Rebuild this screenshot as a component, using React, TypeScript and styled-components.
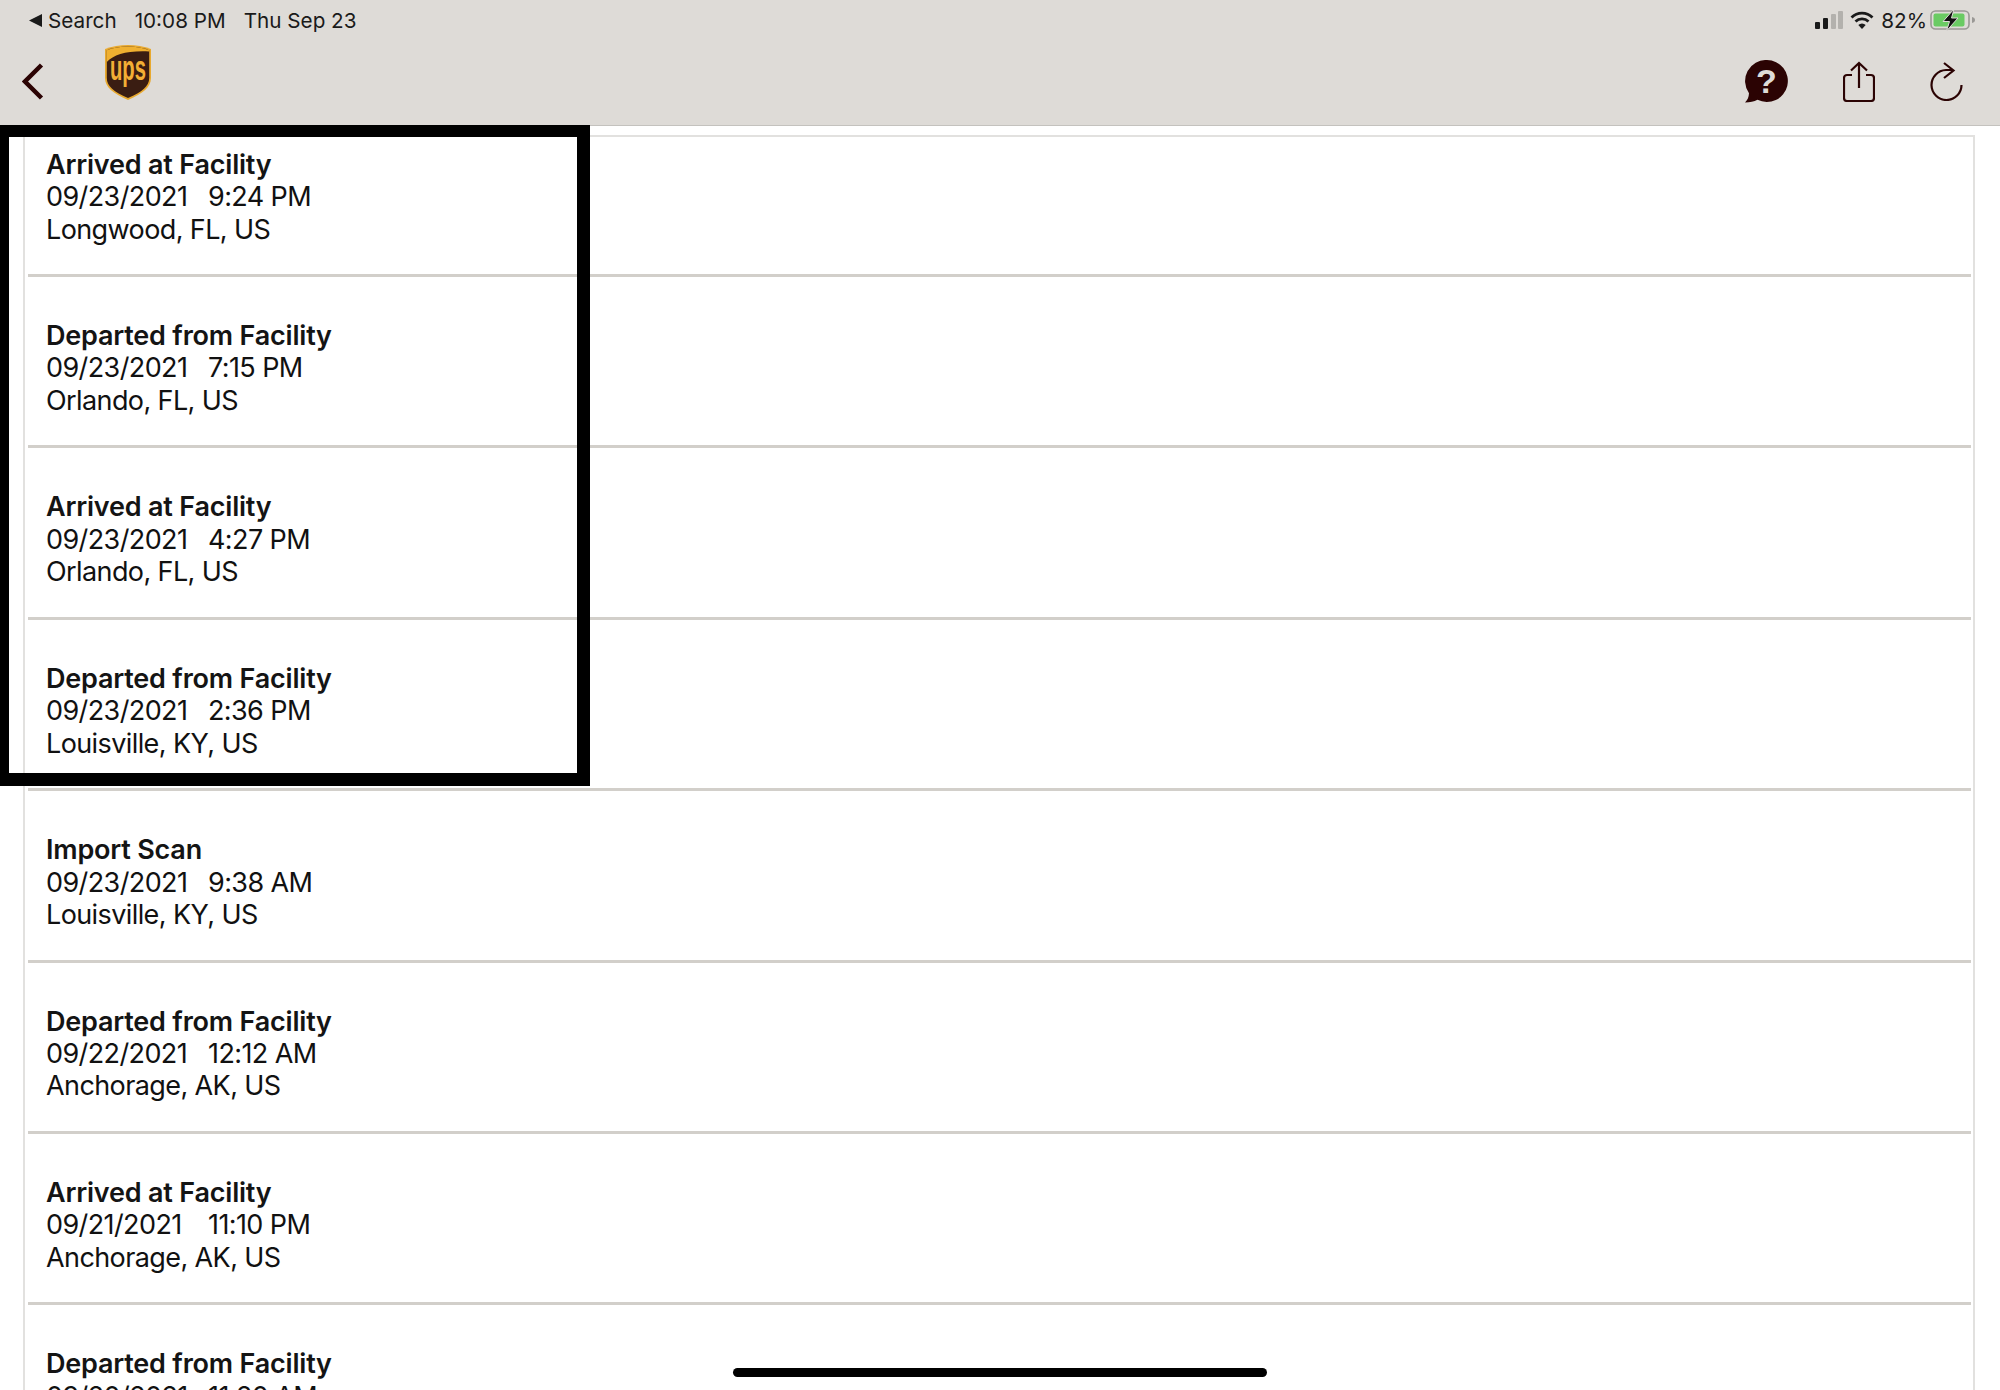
import React, { FC } from "react";
import styled, { createGlobalStyle } from "styled-components";

type ScanEvent = {
  title: string
  date: string
  time: string
  place: string
}

const events: Array<ScanEvent> = [
  { title: "Arrived at Facility", date: "09/23/2021", time: "9:24 PM", place: "Longwood, FL, US" },
  { title: "Departed from Facility", date: "09/23/2021", time: "7:15 PM", place: "Orlando, FL, US" },
  { title: "Arrived at Facility", date: "09/23/2021", time: "4:27 PM", place: "Orlando, FL, US" },
  { title: "Departed from Facility", date: "09/23/2021", time: "2:36 PM", place: "Louisville, KY, US" },
  { title: "Import Scan", date: "09/23/2021", time: "9:38 AM", place: "Louisville, KY, US" },
  { title: "Departed from Facility", date: "09/22/2021", time: "12:12 AM", place: "Anchorage, AK, US" },
  { title: "Arrived at Facility", date: "09/21/2021", time: "11:10 PM", place: "Anchorage, AK, US" },
  { title: "Departed from Facility", date: "09/20/2021", time: "11:20 AM", place: "Anchorage, AK, US" },
];

const GlobalStyle = createGlobalStyle`
  html, body {
    margin: 0;
    padding: 0;
    background: #fff;
  }
  * {
    box-sizing: border-box;
  }
`;

const Screen = styled.div`
  position: relative;
  width: 2000px;
  height: 1390px;
  overflow: hidden;
  background: #fff;
  font-family: Inter, "Liberation Sans", sans-serif;
  color: #111;
`;

const Header = styled.header`
  height: 126px;
  background: #dedbd7;
  border-bottom: 1px solid #c4c2be;
`;

const StatusBar = styled.div`
  height: 40px;
  display: flex;
  align-items: center;
  justify-content: space-between;
  padding: 0 24px 0 29px;
  font-size: 20.7px;
  color: #1a1a1a;
`;

const StatusGroup = styled.div<{ $gap: number }>`
  display: flex;
  align-items: center;
  gap: ${(p) => p.$gap}px;
`;

const BackToApp = styled.span`
  display: flex;
  align-items: center;
  gap: 6px;
`;

const Percent = styled.span`
  margin-right: -4px;
`;

const NavBar = styled.nav`
  height: 83px;
  display: flex;
  align-items: center;
  justify-content: space-between;
  padding: 0 37px 0 22px;
`;

const NavGroup = styled.div<{ $gap: number }>`
  display: flex;
  align-items: center;
  gap: ${(p) => p.$gap}px;
`;

const LogoSlot = styled.div`
  display: flex;
  margin-bottom: 18px;
`;

const Panel = styled.main`
  margin: 9px 25px 0 23px;
  height: 1300px;
  border: 2px solid #e2e1df;
  border-bottom: none;
`;

const Row = styled.section`
  height: 171.4px;
  padding: 43px 0 0 18px;
  margin-left: 3px;
  margin-right: 2px;
  border-bottom: 3px solid #d2cfca;
  font-size: 27px;
  line-height: 32.4px;
  letter-spacing: -0.6px;

  &:first-child {
    height: 140px;
    padding-top: 12px;
  }
`;

const Title = styled.div`
  font-weight: 600;
  color: #141414;
  letter-spacing: -0.2px;
`;

const Stamp = styled.div`
  display: grid;
  grid-template-columns: 162px auto;
`;

const Highlight = styled.div`
  position: absolute;
  left: -5px;
  top: 125px;
  width: 595px;
  height: 661px;
  border: solid #000;
  border-width: 12px 13px 13px 14px;
`;

const HomeBar = styled.div`
  position: absolute;
  left: 733px;
  top: 1368px;
  width: 534px;
  height: 9px;
  border-radius: 5px;
  background: #000;
`;

const Icon = styled.svg`
  display: block;
  flex: none;
`;

const ink = "#2b0303";

const Triangle: FC = () => (
  <Icon width="13" height="13" viewBox="0 0 13 13">
    <path d="M0 6.5 13 0v13z" fill="#1a1a1a" />
  </Icon>
);

const SignalBars: FC = () => (
  <Icon width="28" height="18" viewBox="0 0 28 18">
    <rect x="0" y="11" width="5" height="7" rx="1" fill="#1a1a1a" />
    <rect x="8" y="7" width="5" height="11" rx="1" fill="#1a1a1a" />
    <rect x="16" y="3" width="5" height="15" rx="1" fill="#b3b1ad" />
    <rect x="23" y="0" width="5" height="18" rx="1" fill="#b3b1ad" />
  </Icon>
);

const Wifi: FC = () => (
  <Icon width="24" height="18" viewBox="0 0 24 18">
    <path d="M1.5 6.5a15 15 0 0 1 21 0" fill="none" stroke="#1a1a1a" strokeWidth="2.8" />
    <path d="M5.5 10.5a9.5 9.5 0 0 1 13 0" fill="none" stroke="#1a1a1a" strokeWidth="2.8" />
    <path d="M12 18 8.3 14a5.3 5.3 0 0 1 7.4 0z" fill="#1a1a1a" />
  </Icon>
);

const Battery: FC = () => (
  <Icon width="46" height="22" viewBox="0 0 46 22">
    <rect x="1" y="2" width="38" height="18" rx="4.5" fill="none" stroke="#9a9895" strokeWidth="1.6" />
    <rect x="3.5" y="4.5" width="31" height="13" rx="2" fill="#6acb63" />
    <path d="M42 8c2 .4 3 1.500 3 3s-1 2.600-3 3z" fill="#9a9895" />
    <path d="M24 0 13 12.500h6.500L16.500 22 28 9h-6.500z" fill="#111" stroke="#dedbd7" strokeWidth="1" />
  </Icon>
);

const BackChevron: FC = () => (
  <Icon width="22" height="37" viewBox="0 0 22 37">
    <path d="M19.500 2 3 18.500 19.500 35" fill="none" stroke={ink} strokeWidth="4.500" />
  </Icon>
);

// shield is drawn, the letters stay real text
const UpsLogo: FC = () => (
  <Icon width="46" height="55" viewBox="0 0 46 55">
    <path d="M23 0C15 0 7 1.200 0 4v29c0 9 8 15.500 23 22 15-6.500 23-13 23-22V4C39 1.200 31 0 23 0z" fill="#e8a92f" />
    <path d="M23 1.500C15.500 1.500 8.500 2.600 1.800 5.300V33c0 8 7 14 21.200 20 14.200-6 21.200-12 21.200-20V5.300C37.500 2.600 30.500 1.500 23 1.500z" fill="#3a1d12" />
    <path d="M1.800 5.300V17C9 9.500 22 5.500 44.200 6.500v-1.200C37.500 2.600 30.500 1.500 23 1.500 15.500 1.500 8.500 2.600 1.800 5.300z" fill="#f0b030" />
    <text
      x="23"
      y="35"
      textAnchor="middle"
      textLength="36"
      lengthAdjust="spacingAndGlyphs"
      fontFamily="'Liberation Sans', sans-serif"
      fontWeight="700"
      fontSize="35"
      fill="#f3ae35"
    >
      ups
    </text>
  </Icon>
);

const HelpBubble: FC = () => (
  <Icon width="43" height="43" viewBox="0 0 43 43">
    <path d="M22 0a21 21 0 1 1-9.500 39.800C9 41.500 5 42.500 0 42.500c2.500-2.500 3.800-5.500 4-9.300A21 21 0 0 1 22 0z" fill={ink} />
    <text
      x="21.500"
      y="33"
      textAnchor="middle"
      fontFamily="'Liberation Sans', sans-serif"
      fontWeight="700"
      fontSize="34"
      fill="#dedbd7"
    >
      ?
    </text>
  </Icon>
);

const ShareIcon: FC = () => (
  <Icon width="32" height="41" viewBox="0 0 32 41">
    <g fill="none" stroke={ink} strokeWidth="2.200">
      <path d="M9 14H4a3 3 0 0 0-3 3v20a3 3 0 0 0 3 3h24a3 3 0 0 0 3-3V17a3 3 0 0 0-3-3h-5" />
      <path d="M16 27V2M8 9.500 16 2l8 7.500" />
    </g>
  </Icon>
);

const RefreshIcon: FC = () => (
  <Icon width="33" height="39" viewBox="0 0 33 39">
    <g fill="none" stroke={ink} strokeWidth="2.200">
      <path d="M31.500 23A15 15 0 1 1 16 8h7" />
      <path d="M14 1l9.500 7.500L14 16" />
    </g>
  </Icon>
);

const App: FC = () => {
  return (
    <Screen>
      <GlobalStyle />
      <Header>
        <StatusBar>
          <StatusGroup $gap={18}>
            <BackToApp>
              <Triangle />
              Search
            </BackToApp>
            <span>10:08 PM</span>
            <span>Thu Sep 23</span>
          </StatusGroup>
          <StatusGroup $gap={7}>
            <SignalBars />
            <Wifi />
            <Percent>82%</Percent>
            <Battery />
          </StatusGroup>
        </StatusBar>
        <NavBar>
          <NavGroup $gap={61}>
            <BackChevron />
            <LogoSlot>
              <UpsLogo />
            </LogoSlot>
          </NavGroup>
          <NavGroup $gap={55}>
            <HelpBubble />
            <ShareIcon />
            <RefreshIcon />
          </NavGroup>
        </NavBar>
      </Header>
      <Panel>
        {events.map((e, i) => (
          <Row key={i}>
            <Title>{e.title}</Title>
            <Stamp>
              <span>{e.date}</span>
              <span>{e.time}</span>
            </Stamp>
            <div>{e.place}</div>
          </Row>
        ))}
      </Panel>
      <Highlight />
      <HomeBar />
    </Screen>
  );
};

export default App;
